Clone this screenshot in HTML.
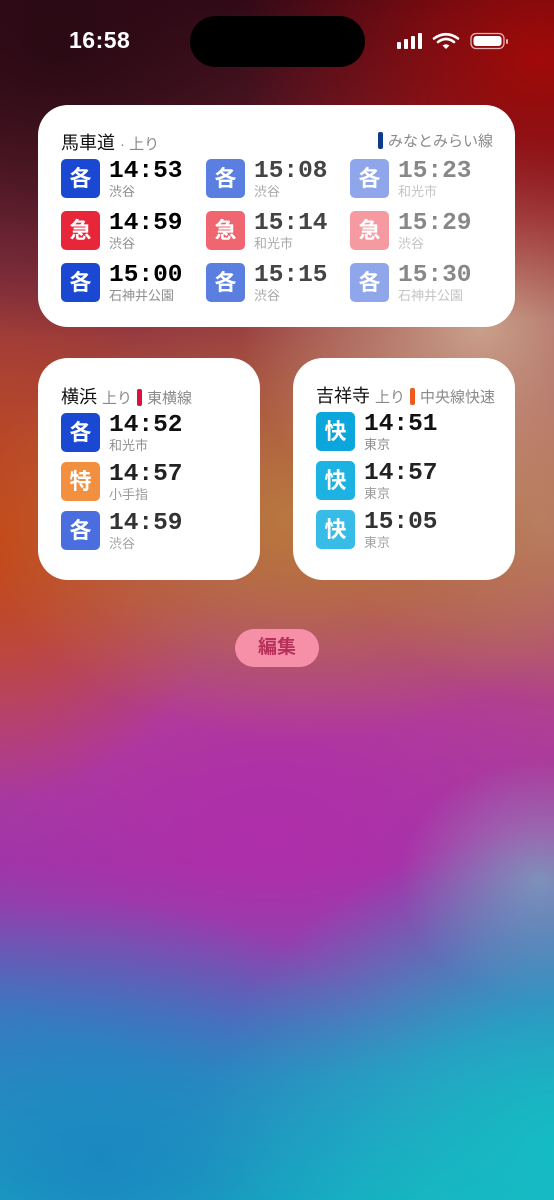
<!DOCTYPE html>
<html><head><meta charset="utf-8"><style>
*{margin:0;padding:0;box-sizing:border-box}
body{width:554px;height:1200px;overflow:hidden;position:relative;font-family:"Liberation Sans","Noto Sans CJK JP",sans-serif;
background:
radial-gradient(ellipse 300px 260px at 540px 60px,#a00a08 0%,rgba(160,10,8,0) 100%),
radial-gradient(ellipse 380px 300px at 60px 40px,#2a0a14 0%,rgba(42,10,20,0) 100%),
radial-gradient(ellipse 240px 200px at 480px 330px,#c9a08a 0%,rgba(201,160,138,0) 100%),
radial-gradient(ellipse 320px 220px at 300px 520px,#b87840 0%,rgba(184,120,64,0) 100%),
radial-gradient(ellipse 230px 260px at 0px 540px,#c44818 0%,rgba(196,72,24,0) 100%),
radial-gradient(ellipse 200px 180px at 540px 520px,#b8806a 0%,rgba(184,128,106,0) 100%),
radial-gradient(ellipse 360px 320px at 560px 1150px,#14bcc4 0%,rgba(20,188,196,0) 100%),
radial-gradient(ellipse 340px 260px at 100px 1160px,#1a88c0 0%,rgba(26,136,192,0) 100%),
radial-gradient(ellipse 140px 120px at 540px 880px,rgba(140,170,190,.7) 0%,rgba(140,170,190,0) 100%),
radial-gradient(ellipse 380px 250px at 270px 830px,#b02eaa 0%,rgba(176,46,170,0) 100%),
linear-gradient(180deg,#3a0a1a 0%,#8a3040 20%,#b45040 45%,#b04290 60%,#9a38a8 72%,#4a70c0 85%,#18b0c0 100%);}
.sb-time{position:absolute;left:69px;top:27px;color:#fff;font-size:23px;font-weight:bold;letter-spacing:.5px}
.island{position:absolute;left:190px;top:16px;width:175px;height:51px;border-radius:26px;background:#000}
.w{position:absolute;background:#fff;border-radius:30px}
.title{position:absolute;font-size:18px;color:#111;white-space:nowrap}
.title small{font-size:15px;color:#8a8a8a}
.line{position:absolute;font-size:15px;color:#8a8a8a;white-space:nowrap}
.line i{display:inline-block;width:5px;height:17px;border-radius:2px;vertical-align:-3px;margin-right:5px}
.e{position:absolute;width:150px;height:45px}
.b{position:absolute;left:0;top:0;width:39px;height:39px;border-radius:5px;color:#fff;font-size:22px;font-weight:bold;text-align:center;line-height:39px}
.t{position:absolute;left:48px;top:-1px;font-family:"Liberation Mono",monospace;font-weight:bold;font-size:24.5px;letter-spacing:0;line-height:28px}
.d{position:absolute;left:48px;top:25px;font-size:13px;color:#8f8f8f;line-height:16px;white-space:nowrap}
.edit{position:absolute;left:235px;top:629px;width:84px;height:38px;border-radius:19px;background:#f590a8;color:#b8305a;font-size:19px;font-weight:bold;text-align:center;line-height:38px}
</style></head><body>
<div class="sb-time">16:58</div>
<div class="island"></div>
<svg style="position:absolute;left:396px;top:32px" width="116" height="18" viewBox="0 0 116 18">
<rect x="1" y="10" width="4" height="7" rx="1" fill="#fff"/><rect x="8" y="7" width="4" height="10" rx="1" fill="#fff"/><rect x="15" y="4" width="4" height="13" rx="1" fill="#fff"/><rect x="22" y="1" width="4" height="16" rx="1" fill="#fff"/>
<path d="M38 6.5 Q50 -2 62 6.5" stroke="#fff" stroke-width="2.6" fill="none" stroke-linecap="round"/>
<path d="M42 10 Q50 4 58 10" stroke="#fff" stroke-width="2.6" fill="none" stroke-linecap="round"/>
<path d="M46.5 13.5 L50 17 L53.5 13.5 Q50 11 46.5 13.5Z" fill="#fff"/>
<rect x="75" y="1.5" width="33" height="15" rx="5" fill="none" stroke="#e8b0b0" stroke-width="1.3"/>
<rect x="77.5" y="4" width="28" height="10" rx="3" fill="#fff"/>
<rect x="110" y="7" width="2" height="5" rx="1" fill="#e8b0b0"/>
</svg>

<div class="w" style="left:38px;top:105px;width:477px;height:222px">
<div class="title" style="left:23px;top:24px">馬車道 <small>· 上り</small></div>
<div class="line" style="right:22px;top:25px"><i style="background:#0d3a8a"></i>みなとみらい線</div>
<div class="e" style="left:23px;top:54px"><div class="b" style="background:#1b48d2">各</div><div class="t" style="color:#000">14:53</div><div class="d">渋谷</div></div>
<div class="e" style="left:168px;top:54px"><div class="b" style="background:#5b7fe0">各</div><div class="t" style="color:#444">15:08</div><div class="d" style="color:#aaa">渋谷</div></div>
<div class="e" style="left:312px;top:54px"><div class="b" style="background:#8fa6ea">各</div><div class="t" style="color:#888">15:23</div><div class="d" style="color:#c4c4c4">和光市</div></div>
<div class="e" style="left:23px;top:106px"><div class="b" style="background:#e8263a">急</div><div class="t" style="color:#000">14:59</div><div class="d">渋谷</div></div>
<div class="e" style="left:168px;top:106px"><div class="b" style="background:#ef6671">急</div><div class="t" style="color:#444">15:14</div><div class="d" style="color:#aaa">和光市</div></div>
<div class="e" style="left:312px;top:106px"><div class="b" style="background:#f59aa0">急</div><div class="t" style="color:#888">15:29</div><div class="d" style="color:#c4c4c4">渋谷</div></div>
<div class="e" style="left:23px;top:158px"><div class="b" style="background:#1b48d2">各</div><div class="t" style="color:#000">15:00</div><div class="d">石神井公園</div></div>
<div class="e" style="left:168px;top:158px"><div class="b" style="background:#5b7fe0">各</div><div class="t" style="color:#444">15:15</div><div class="d" style="color:#aaa">渋谷</div></div>
<div class="e" style="left:312px;top:158px"><div class="b" style="background:#8fa6ea">各</div><div class="t" style="color:#888">15:30</div><div class="d" style="color:#c4c4c4">石神井公園</div></div>
</div>

<div class="w" style="left:38px;top:358px;width:222px;height:222px">
<div class="title" style="left:23px;top:25px">横浜 <small>上り</small> <span class="line" style="position:static"><i style="background:#d8123e"></i>東横線</span></div>
<div class="e" style="left:23px;top:55px"><div class="b" style="background:#1b48d2">各</div><div class="t" style="color:#111">14:52</div><div class="d">和光市</div></div>
<div class="e" style="left:23px;top:104px"><div class="b" style="background:#f29040">特</div><div class="t" style="color:#222">14:57</div><div class="d" style="color:#9a9a9a">小手指</div></div>
<div class="e" style="left:23px;top:153px"><div class="b" style="background:#4a6ee0">各</div><div class="t" style="color:#333">14:59</div><div class="d" style="color:#a4a4a4">渋谷</div></div>
</div>

<div class="w" style="left:293px;top:358px;width:222px;height:222px">
<div class="title" style="left:23px;top:24px">吉祥寺 <small>上り</small> <span class="line" style="position:static"><i style="background:#f05a1e"></i>中央線快速</span></div>
<div class="e" style="left:23px;top:54px"><div class="b" style="background:#0aa6dc">快</div><div class="t" style="color:#111">14:51</div><div class="d">東京</div></div>
<div class="e" style="left:23px;top:103px"><div class="b" style="background:#1cb2e2">快</div><div class="t" style="color:#222">14:57</div><div class="d" style="color:#9a9a9a">東京</div></div>
<div class="e" style="left:23px;top:152px"><div class="b" style="background:#36bce6">快</div><div class="t" style="color:#333">15:05</div><div class="d" style="color:#a4a4a4">東京</div></div>
</div>

<div class="edit">編集</div>
</body></html>
